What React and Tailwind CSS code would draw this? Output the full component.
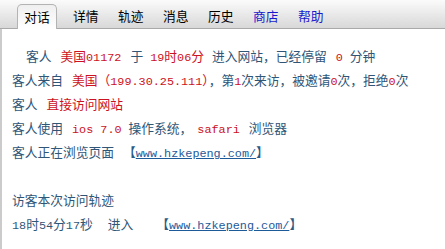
const TABS = [
  { label: "详情", blue: false },
  { label: "轨迹", blue: false },
  { label: "消息", blue: false },
  { label: "历史", blue: false },
  { label: "商店", blue: true },
  { label: "帮助", blue: true },
];

// latin runs use a monospace like the original page
const M = ({ children }) => (
  <span className="font-['Liberation_Mono'] text-[11.8px] leading-none">{children}</span>
);
const R = ({ children }) => <span className="text-[#cc1122]">{children}</span>;
const Gap = () => <span className="inline-block w-[9px]" />;

function Link({ href }) {
  return (
    <>
      <span className="text-[#2b5a85]">【</span>
      <span className="font-['Liberation_Mono'] text-[11.8px] leading-none text-[#1d5a9a] underline">
        {href}
      </span>
      <span className="text-[#2b5a85]">】</span>
    </>
  );
}

function Line({ className = "", children }) {
  return <div className={`h-[24px] leading-[24px] overflow-hidden ${className}`}>{children}</div>;
}

export default function App() {
  return (
    <div
      className="w-[445px] h-[249px] overflow-hidden bg-white text-[12.75px]"
      style={{ fontFamily: '"Noto Sans CJK SC", "Liberation Sans", sans-serif' }}
    >
      {/* Tab bar */}
      <div className="h-[29px] flex items-end pl-[17px] bg-gradient-to-b from-[#fbfbfb] to-[#d8d8d8] border-b border-[#a9a9a9]">
        <div className="w-[40px] h-[25px] -mb-px flex items-center justify-center rounded-t-[5px] border border-b-0 border-[#b3b3b3] bg-gradient-to-b from-[#efefef] to-white text-black">
          对话
        </div>
        <div className="w-[16px]" />
        {TABS.map((t) => (
          <div
            key={t.label}
            className={`w-[45px] h-[25px] flex items-center ${t.blue ? "text-[#1a1acc]" : "text-black"}`}
          >
            {t.label}
          </div>
        ))}
      </div>

      {/* Content */}
      <div className="h-[220px] border-l-2 border-[#cbcbcb] pl-[10px] pt-[15px] text-[#2f5677] whitespace-nowrap">
        <Line className="pl-[14px]">
          客人<Gap />
          <R>
            美国<M>01172</M>
          </R>
          <Gap />于<span className="inline-block w-[7px]" />
          <R>
            <M>19</M>时<M>06</M>分
          </R>
          <span className="inline-block w-[8px]" />
          进入网站，已经停留<Gap />
          <R>
            <M>0</M>
          </R>
          <span className="inline-block w-[7px]" />
          分钟
        </Line>
        <Line>
          客人来自<Gap />
          <R>
            美国（<M>199.30.25.111</M>）
          </R>
          ，第<R><M>1</M></R>次来访，被邀请<R><M>0</M></R>次，拒绝<R><M>0</M></R>次
        </Line>
        <Line>
          客人<Gap />
          <R>直接访问网站</R>
        </Line>
        <Line>
          客人使用<Gap />
          <R>
            <M>ios 7.0</M>
          </R>
          <span className="inline-block w-[7px]" />
          操作系统，<span className="inline-block w-[5px]" />
          <R>
            <M>safari</M>
          </R>
          <Gap />
          浏览器
        </Line>
        <Line>
          客人正在浏览页面<Gap />
          <Link href="www.hzkepeng.com/" />
        </Line>
        <Line />
        <Line>访客本次访问轨迹</Line>
        <Line>
          <M>18</M>时<M>54</M>分<M>17</M>秒
          <span className="inline-block w-[15px]" />
          进入
          <span className="inline-block w-[23px]" />
          <Link href="www.hzkepeng.com/" />
        </Line>
      </div>
    </div>
  );
}
